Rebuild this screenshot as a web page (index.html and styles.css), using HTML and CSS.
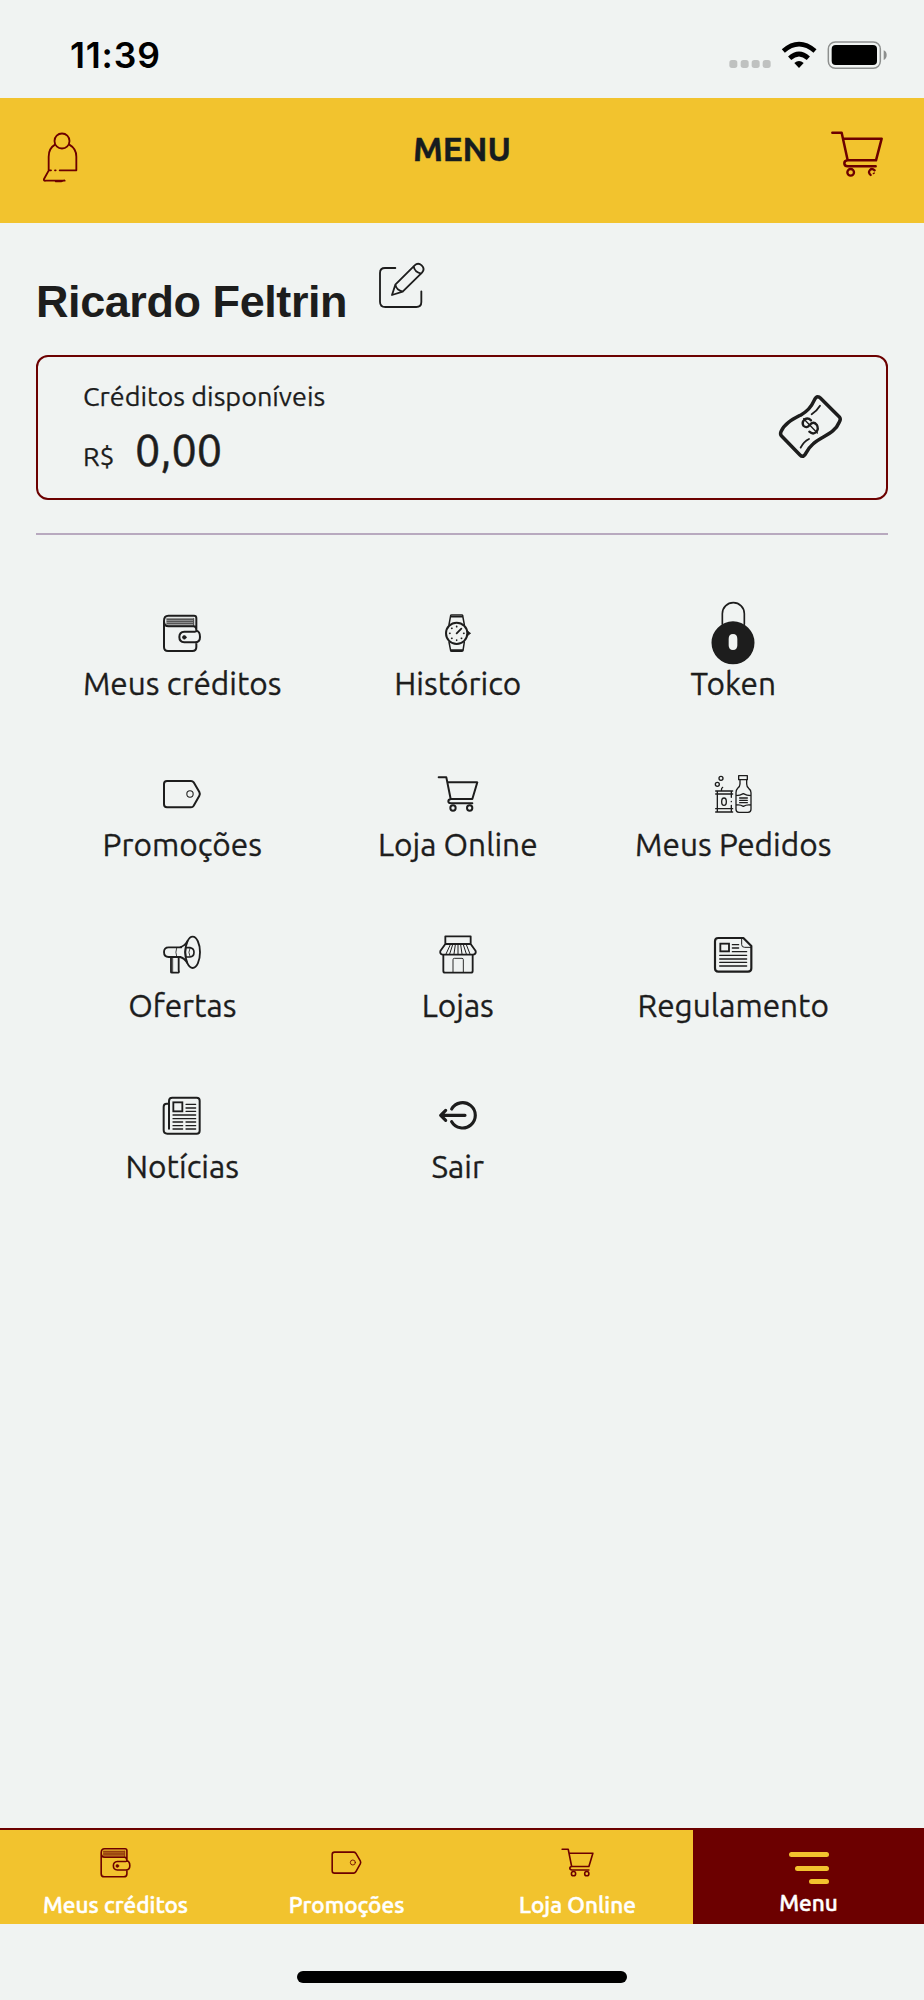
FILE: index.html
```html
<!DOCTYPE html>
<html lang="pt-BR">
<head>
<meta charset="utf-8">
<title>Menu</title>
<link rel="stylesheet" href="styles.css">
</head>
<body>
<svg class="defs" aria-hidden="true">
  <symbol id="wallet" viewBox="300 63 132 132">
    <rect x="319" y="84" width="83" height="25" fill="currentColor" opacity=".4"/>
    <path d="M312 94V171Q312 183 324 183H397Q409 183 409 171V157M409 124V84Q409 77 402 77H325Q312 77 312 93Q312 109 326 109H400Q409 109 409 122M405 125H373Q358 126 358 141Q358 156 373 157H405Q420 157 420 141Q420 125 410 122" stroke-width="6"/>
    <path d="M401 86V107M321 88H398M321 94H398M321 100H398" stroke-width="2"/>
    <circle cx="373" cy="142" r="5.5" fill="currentColor" stroke-width="2"/>
  </symbol>
  <symbol id="tag" viewBox="300 546 132 132">
    <path d="M321 573H393Q398 573 401 577L418 606Q421 612 418 617L401 647Q398 652 393 652H321Q312 652 312 643V582Q312 573 321 573Z" stroke-width="6"/>
    <circle cx="390" cy="612" r="9.5" stroke-width="3.2"/>
  </symbol>
  <symbol id="cart" viewBox="257 546 132 132">
    <path d="M265 562H288L301 627H366L381 577H292M302 627Q294 628 294 634Q294 640 302 640H366" stroke-width="6"/>
    <circle cx="308" cy="654" r="8" stroke-width="6"/><circle cx="358" cy="654" r="8" stroke-width="6"/>
  </symbol>
</svg>

<div class="screen">
  <div class="status">
    <span class="time">11:39</span>
    <svg class="status-icons" viewBox="796 117 483 96">
      <g fill="#bfc1c0"><rect x="800" y="180" width="24" height="24" rx="8"/><rect x="834" y="180" width="24" height="24" rx="8"/><rect x="867" y="180" width="24" height="24" rx="8"/><rect x="900" y="180" width="24" height="24" rx="8"/></g>
      <path d="M962 153Q1009 112 1057 153" fill="none" stroke="#000" stroke-width="14"/>
      <path d="M981 175Q1009 149 1037 175" fill="none" stroke="#000" stroke-width="14"/>
      <path d="M995 189Q1009 177 1023 189L1009 204Z"/>
      <rect x="1097" y="126" width="156" height="79" rx="21" fill="none" stroke="#8d8f8e" stroke-width="4.5"/>
      <rect x="1107" y="135" width="136" height="60" rx="12"/>
      <path d="M1263 151Q1272 155 1272 165Q1272 176 1263 180Z" fill="#8d8f8e"/>
    </svg>
  </div>

  <header class="header">
    <svg class="icon bell" viewBox="124 390 117 165">
      <circle cx="187" cy="423" r="22.5" stroke-width="5.5"/>
      <path d="M166 434Q147 445 147 470V511H154M166 511H168M180 511H230V470Q230 446 209 434M147 512L133 537Q131 543 138 542H195M168 544H184L194 541" stroke-width="5.5"/>
    </svg>
    <h1 class="title">MENU</h1>
    <svg class="icon head-cart" viewBox="1104 388 165 150">
      <path d="M1111 399H1139L1157 482H1242L1259 417H1145M1157 482Q1147 483 1147 491Q1147 500 1157 500H1241" stroke-width="7.5"/>
      <circle cx="1166" cy="518" r="10" stroke-width="7"/>
      <path d="M1226 526Q1217 518 1224 511Q1230 505 1238 512" stroke-width="7"/>
      <path d="M1237 520L1234 522" stroke-width="4"/>
    </svg>
  </header>

  <main class="content">
    <div class="user">
      <h2 class="name">Ricardo Feltrin</h2>
      <svg class="icon edit" viewBox="1134 63 144 144">
        <path d="M1186 84H1155Q1140 84 1140 99V185Q1140 201 1156 201H1249Q1264 201 1264 186V154" stroke-width="5.5"/>
        <path d="M1176 165L1186 134L1244 76Q1254 66 1265 76Q1276 87 1266 98L1208 155ZM1186 134Q1189 150 1208 155M1241 79Q1244 96 1263 101" stroke-width="5.5"/>
      </svg>
    </div>

    <section class="card">
      <div class="balance">
        <span class="caption">Créditos disponíveis</span>
        <div class="amount"><span class="currency">R$</span><span class="value">0,00</span></div>
      </div>
      <svg class="icon money" viewBox="945 160 198 198">
        <path d="M1067 171Q1072 171 1075 175L1133 233Q1137 238 1132 247C1117 284 1080 288 1053 313C1030 333 1032 350 1021 350Q1018 350 1014 346L958 288Q954 284 957 276C967 251 992 239 1018 225C1061 201 1053 171 1067 171Z" stroke-width="10.5"/>
        <path d="M1074 198Q1064 214 1049 224M1041 298Q1025 306 1016 324" stroke-width="5.5"/>
        <path d="M1047 242Q1038 233 1028 239Q1018 249 1025 259Q1034 267 1043 256Q1054 243 1064 255Q1071 267 1063 277Q1053 286 1042 276" stroke-width="7"/>
        <path d="M1025 237L1066 280" stroke-width="4"/>
      </svg>
    </section>
    <hr class="rule">

    <nav class="grid">
      <a class="item"><svg class="icon"><use href="#wallet"/></svg><span class="label">Meus créditos</span></a>
      <a class="item">
        <svg class="icon" viewBox="257 63 132 132">
          <path d="M296 104L301 77Q301 75 304 75H334Q337 75 337 77L342 104M296 156L301 182Q301 184 304 184H334Q337 184 338 182L342 156M301 80H337M301 180H337" stroke-width="4.500"/>
          <circle cx="319" cy="130" r="32" stroke-width="6"/><path d="M353 124L361 130L353 136Z" fill="currentColor" stroke-width="2"/>
          <path d="M319 130L333 116" stroke-width="5.500"/>
          <path d="M319 109V110M319 150V151M298 130H299M340 130H341M304 115H305M304 145H305M333 145H334" stroke-width="5"/>
        </svg><span class="label">Histórico</span></a>
      <a class="item">
        <svg class="icon" viewBox="303 63 132 132">
          <path d="M337 103V71A33 33 0 0 1 403 71V103" stroke-width="5"/>
          <path d="M369 94A64.500 64.500 0 1 0 369 223A64.500 64.500 0 1 0 369 94ZM369 132Q382 132 382 147V166Q382 180 369 180Q356 180 356 166V147Q356 132 369 132Z" fill="currentColor" fill-rule="evenodd" stroke="none"/>
        </svg><span class="label">Token</span></a>
      <a class="item"><svg class="icon"><use href="#tag"/></svg><span class="label">Promoções</span></a>
      <a class="item"><svg class="icon"><use href="#cart"/></svg><span class="label">Loja Online</span></a>
      <a class="item">
        <svg class="icon" viewBox="303 546 132 132">
          <g stroke-width="4"><circle cx="333" cy="565" r="6"/><circle cx="322" cy="583" r="6"/>
          <path d="M334 602Q334 595 338 592M317 603H368M317 612H368M322 603V666M317 656H368M317 666H368M364 603V622M364 634V635M364 646V666"/>
          <ellipse cx="342" cy="635" rx="7" ry="11"/>
          <path d="M386 557H412V569H386ZM390 569V582Q390 589 383 595Q378 600 378 608V658Q378 667 387 667H414Q423 667 423 658V608Q423 600 416 595Q410 589 410 582V569M378 617Q390 617 400 611Q410 617 423 617M378 645Q391 643 400 649Q410 643 423 645M389 624H412M389 631H412M389 638H412"/></g>
        </svg><span class="label">Meus Pedidos</span></a>
      <a class="item">
        <svg class="icon" viewBox="180 69 132 132">
          <ellipse cx="278" cy="127" rx="22" ry="47" stroke-width="5.5"/>
          <path d="M244 112H206Q192 112 192 126Q192 141 206 141H242M239 112Q255 107 262 94M240 141Q253 144 261 158M213 142V187Q213 188 216 188H235Q238 187 236 181V142" stroke-width="5.5"/>
          <path d="M257 113H270Q282 115 282 127Q282 140 270 141H257Q253 127 257 113Z" stroke-width="5"/>
          <path d="M230 113Q225 127 230 140M270 114Q263 127 270 140M218 143V186" stroke-width="2.500"/>
        </svg><span class="label">Ofertas</span></a>
      <a class="item">
        <svg class="icon" viewBox="1007 69 132 132">
          <path d="M1035 79H1111V102H1035ZM1035 102L1020 123Q1018 132 1027 134H1119Q1128 132 1126 123L1111 102M1029 134V183Q1029 188 1034 188H1112Q1117 188 1117 183V134" stroke-width="5.500"/>
          <path d="M1037 132L1050 104M1048 132L1057 104M1061 132L1065 104M1073 132V104M1085 132L1081 104M1098 132L1089 104M1109 132L1098 104" stroke-width="3"/>
          <path d="M1058 187V149Q1058 145 1062 145H1085Q1089 145 1089 149V187" stroke-width="2.800"/>
        </svg><span class="label">Lojas</span></a>
      <a class="item">
        <svg class="icon" viewBox="303 69 132 132">
          <path d="M325 84H400L424 108V175Q424 185 414 185H325Q315 185 315 175V94Q315 84 325 84Z" stroke-width="6.500"/>
          <path d="M395 87V104Q395 112 404 112H422" stroke-width="3"/>
          <rect x="331" y="101" width="26" height="23" stroke-width="5.500" stroke-linejoin="miter"/>
          <path d="M367 104H386M367 114H386M367 125H410M329 136H410M329 147H410M329 157H410M329 168H410" stroke-width="3.800"/>
        </svg><span class="label">Regulamento</span></a>
      <a class="item">
        <svg class="icon" viewBox="180 552 132 132">
          <path d="M217 563H290Q299 563 299 572V662Q299 671 290 671H202Q191 671 191 660V590Q191 581 200 581H206M207 656V573Q207 563 217 563" stroke-width="6"/>
          <rect x="220" y="577" width="27" height="27" stroke-width="5.500" stroke-linejoin="miter"/>
          <path d="M258 583H287M258 594H287M258 604H287M219 615H287M219 626H287M219 636H248M258 636H287M219 647H248M258 647H287M219 657H248M258 657H287" stroke-width="3.800"/>
        </svg><span class="label">Notícias</span></a>
      <a class="item">
        <svg class="icon" viewBox="1007 552 132 132">
          <path d="M1054 597A38 38 0 1 1 1054 635M1094 616H1022M1036 601L1021 616L1036 631" stroke-width="9.500"/>
        </svg><span class="label">Sair</span></a>
    </nav>
  </main>

  <nav class="tabs">
    <a class="tab"><svg class="icon"><use href="#wallet"/></svg><span class="tab-label">Meus créditos</span></a>
    <a class="tab"><svg class="icon"><use href="#tag"/></svg><span class="tab-label">Promoções</span></a>
    <a class="tab"><svg class="icon"><use href="#cart"/></svg><span class="tab-label">Loja Online</span></a>
    <a class="tab active"><span class="bars"><i class="bar b1"></i><i class="bar b2"></i><i class="bar b3"></i></span><span class="tab-label">Menu</span></a>
  </nav>
  <div class="home"></div>
</div>
</body>
</html>
```
FILE: styles.css
```css
* { box-sizing: border-box; margin: 0; padding: 0; }
body { background: #f0f3f2; font-family: "Ubuntu", "Noto Sans", "Open Sans", sans-serif; color: #1d1d1d; }
.defs { display: none; }
.screen { width: 924px; height: 2000px; display: flex; flex-direction: column; overflow: hidden; }
.icon { display: block; flex: none; fill: none; stroke: currentColor; stroke-linecap: round; stroke-linejoin: round; overflow: visible; }

.status { height: 98px; flex: none; display: flex; justify-content: space-between; padding: 34px 35px 0 70px; color: #000; }
.time { font: 600 35.500px/43px "Inter", sans-serif; letter-spacing: .8px; }
.status-icons { width: 161px; height: 32px; margin-top: 5px; }

.header { height: 125px; flex: none; background: #f2c32e; display: flex; justify-content: space-between; align-items: flex-start; padding: 32px 39px 0 41px; color: #6c0000; }
.bell { width: 39px; height: 55px; }
.head-cart { width: 55px; height: 50px; margin-top: -1px; }
.title { font-size: 33.500px; line-height: 40px; font-weight: 700; color: #161c1f; margin: -1px 0 0 14px; -webkit-text-stroke: .4px; }

.content { flex: 1; padding: 0 36px; }
.user { display: flex; align-items: flex-start; height: 132px; padding-top: 38px; }
.name { font: 700 45px/50px "Liberation Sans", Arial, sans-serif; letter-spacing: -.430px; margin-top: 16px; }
.edit { width: 48px; height: 48px; margin-left: 31px; }
.card { height: 145px; border: 2px solid #6c0000; border-radius: 12px; display: flex; justify-content: space-between; align-items: center; padding: 0 43px 0 45px; }
.balance { padding-top: 8px; }
.caption { display: block; font-size: 27px; line-height: 36px; -webkit-text-stroke: .25px; }
.amount { display: flex; align-items: baseline; line-height: 60px; margin-top: 6px; }
.currency { font-size: 26.500px; width: 52px; -webkit-text-stroke: .25px; }
.value { font-size: 45px; -webkit-text-stroke: .5px; }
.money { width: 66px; height: 66px; margin-top: -4px; }
.rule { border: 0; height: 2px; background: #b8a9bf; margin-top: 33px; }

.grid { display: grid; grid-template-columns: repeat(3, 275.500px); grid-auto-rows: 160.900px; margin: 76px 0 0 8.500px; }
.item { display: flex; flex-direction: column; align-items: center; gap: 9.300px; }
.item .icon { width: 44px; height: 44px; }
.label { font-size: 31.600px; line-height: 40px; white-space: nowrap; -webkit-text-stroke: .3px; }

.tabs { height: 96px; flex: none; display: grid; grid-template-columns: repeat(4, 231px); border-top: 2px solid #6c0000; background: #f2c32e; }
.tab { display: flex; flex-direction: column; align-items: center; color: #6c0000; padding-top: 15px; gap: 9px; }
.tab .icon { width: 35px; height: 35px; }
.tab-label { font-size: 22.600px; font-weight: 500; line-height: 32px; color: #fff; white-space: nowrap; -webkit-text-stroke: .5px; }
.active { background: #6c0000; padding-top: 22px; gap: 2px; }
.bars { display: flex; flex-direction: column; align-items: flex-end; gap: 8.500px; width: 40px; height: 33px; }
.bar { height: 5px; border-radius: 3px; background: #f2c32e; flex: none; }
.b1 { width: 40px; }
.b2 { width: 33.500px; }
.b3 { width: 20px; }
.home { width: 330px; height: 12px; border-radius: 6px; background: #000; margin: 47px auto 17px; flex: none; }
```
